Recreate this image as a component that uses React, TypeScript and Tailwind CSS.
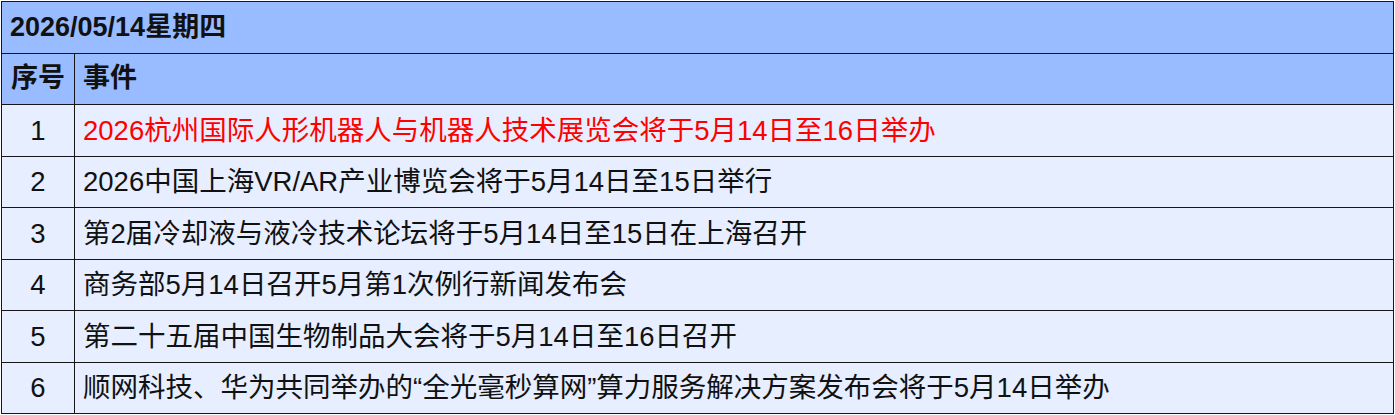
import React from 'react';

const rows = [
  { id: 1, text: '2026杭州国际人形机器人与机器人技术展览会将于5月14日至16日举办', hot: true },
  { id: 2, text: '2026中国上海VR/AR产业博览会将于5月14日至15日举行' },
  { id: 3, text: '第2届冷却液与液冷技术论坛将于5月14日至15日在上海召开' },
  { id: 4, text: '商务部5月14日召开5月第1次例行新闻发布会' },
  { id: 5, text: '第二十五届中国生物制品大会将于5月14日至16日召开' },
  { id: 6, text: '顺网科技、华为共同举办的“全光毫秒算网”算力服务解决方案发布会将于5月14日举办' },
];

export default function App() {
  return (
    <div
      className="w-[1395px] h-[415px] bg-white pl-px pt-px"
      style={{ fontFamily: '"Liberation Sans", "Noto Sans CJK SC", sans-serif' }}
    >
      <div className="w-[1393px] border-t border-x border-[#161616] text-[27.5px] leading-none text-[#111]">
        {/* title */}
        <div className="h-[51.5px] flex items-center px-[8px] bg-[#99bbff] border-b border-[#161616] font-bold text-[27px]">
          2026/05/14星期四
        </div>
        {/* column heads */}
        <div className="h-[51.5px] flex bg-[#99bbff] border-b border-[#161616] font-bold text-[27px]">
          <div className="w-[73px] shrink-0 flex items-center justify-center border-r border-[#161616]">序号</div>
          <div className="flex-1 flex items-center px-[8px]">事件</div>
        </div>
        {rows.map((r) => (
          <div key={r.id} className="h-[51.5px] flex bg-[#e6eeff] border-b border-[#161616]">
            <div className="w-[73px] shrink-0 flex items-center justify-center border-r border-[#161616]">
              {r.id}
            </div>
            <div className={`flex-1 flex items-center px-[8px] whitespace-nowrap ${r.hot ? 'text-[#ff0000]' : ''}`}>
              {r.text}
            </div>
          </div>
        ))}
      </div>
    </div>
  );
}
